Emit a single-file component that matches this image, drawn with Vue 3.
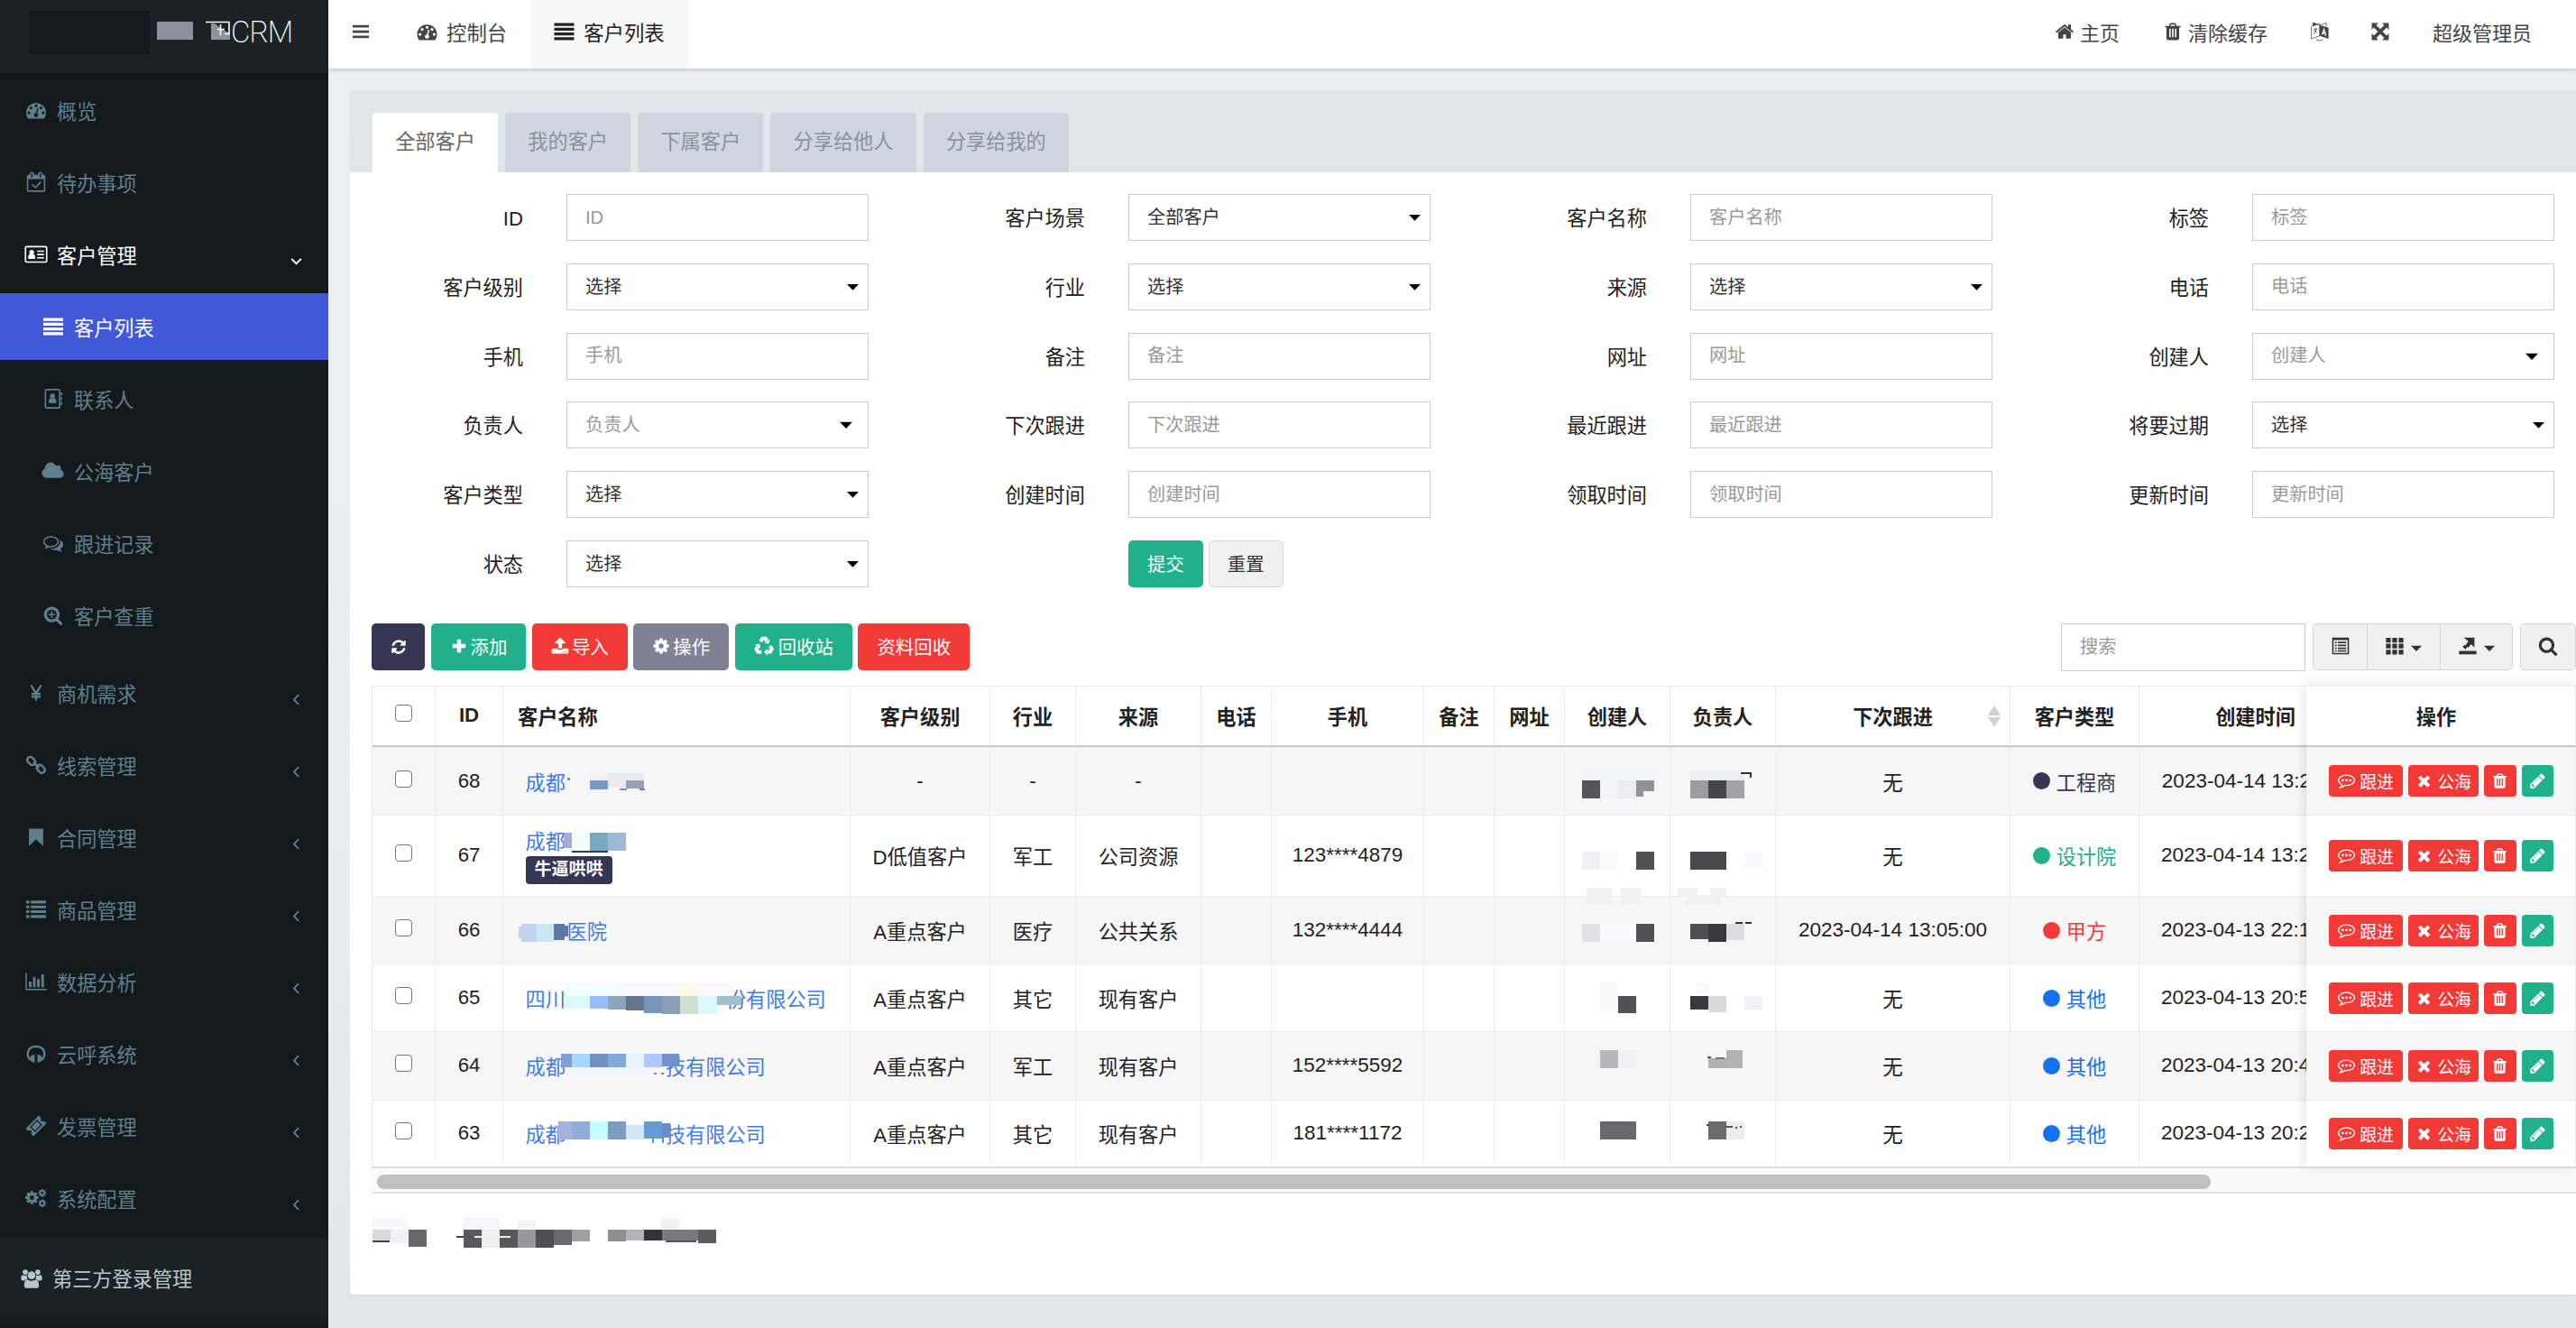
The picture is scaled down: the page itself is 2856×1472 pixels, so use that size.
<script setup>
import { h, ref } from 'vue'

//----------------------------------icons----------------------------//

const cog =
  'M1152 896q0-106-75-181t-181-75-181 75-75 181 75 181 181 75 181-75 75-181zm512-109v222q0 12-8 23t-20 13l-185 28q-19 54-39 91 35 50 107 138 10 12 10 25t-9 23q-27 37-99 108t-94 71q-12 0-26-9l-138-108q-44 23-91 38-16 136-29 186-7 28-36 28h-222q-14 0-24.5-8.5t-11.5-21.5l-28-184q-49-16-90-37l-141 107q-10 9-25 9-14 0-25-11-126-114-165-168-7-10-7-23 0-12 8-23 15-21 51-66.5t54-70.5q-27-50-41-99l-183-27q-13-2-21-12.5t-8-23.5v-222q0-12 8-23t19-13l186-28q14-46 39-92-40-57-107-138-10-12-10-24 0-10 9-23 26-36 98.5-107.5t94.5-71.5q13 0 26 10l138 107q44-23 91-38 16-136 29-186 7-28 36-28h222q14 0 24.5 8.5t11.5 21.5l28 184q49 16 90 37l142-107q9-9 24-9 13 0 25 10 129 119 165 170 7 8 7 22 0 12-8 23-15 21-51 66.5t-54 70.5q26 50 41 98l183 28q13 2 21 12.5t8 23.5z'
const recycleArm =
  '<path d="M620 560L770 310H1020L1130 490" fill="none" stroke="currentColor" stroke-width="290"/><path d="M1390 380L930 640L1270 760z"/>'

const icons = {
  bars: '<path d="M90 250h1610v240H90zM90 780h1610v240H90zM90 1310h1610v240H90z"/>',
  dashboard:
    '<path d="M384 1152q0-53-37.5-90.5t-90.5-37.5-90.5 37.5-37.5 90.5 37.5 90.5 90.5 37.5 90.5-37.5 37.5-90.5zm192-448q0-53-37.5-90.5t-90.5-37.5-90.5 37.5-37.5 90.5 37.5 90.5 90.5 37.5 90.5-37.5 37.5-90.5zm428 481l101-382q6-26-7.5-48.5t-38.5-29.5-48 6.5-30 39.5l-101 382q-60 5-107 43.5t-63 98.5q-20 77 20 146t117 89 146-20 89-117q16-60-6-117t-72-91zm660-33q0-53-37.5-90.5t-90.5-37.5-90.5 37.5-37.5 90.5 37.5 90.5 90.5 37.5 90.5-37.5 37.5-90.5zm-640-640q0-53-37.5-90.5t-90.5-37.5-90.5 37.5-37.5 90.5 37.5 90.5 90.5 37.5 90.5-37.5 37.5-90.5zm448 192q0-53-37.5-90.5t-90.5-37.5-90.5 37.5-37.5 90.5 37.5 90.5 90.5 37.5 90.5-37.5 37.5-90.5zm320 448q0 261-141 483-19 29-54 29h-1402q-35 0-54-29-141-221-141-483 0-182 71-348t191-286 286-191 348-71 348 71 286 191 191 286 71 348z"/>',
  calendar:
    '<path transform="translate(64 -30)" d="M1303 964l-512 512q-10 9-23 9t-23-9l-288-288q-9-10-9-23t9-22l46-46q9-9 22-9t23 9l220 220 444-444q10-9 23-9t22 9l46 46q9 9 9 22t-9 23zm-1175 700h1408v-1024h-1408v1024zm384-1216v-288q0-14-9-23t-23-9h-64q-14 0-23 9t-9 23v288q0 14 9 23t23 9h64q14 0 23-9t9-23zm768 0v-288q0-14-9-23t-23-9h-64q-14 0-23 9t-9 23v288q0 14 9 23t23 9h64q14 0 23-9t9-23zm384-64v1280q0 52-38 90t-90 38h-1408q-52 0-90-38t-38-90v-1280q0-52 38-90t90-38h128v-96q0-66 47-113t113-47h64q66 0 113 47t47 113v96h384v-96q0-66 47-113t113-47h64q66 0 113 47t47 113v96h128q52 0 90 38t38 90z"/>',
  idcard:
    '<rect x="-60" y="190" width="1912" height="1400" rx="110" fill="none" stroke="currentColor" stroke-width="130"/><circle cx="500" cy="700" r="210"/><path d="M180 1230q0-350 180-370q140 90 280 0q180 20 180 370q0 70-70 70H250q-70 0-70-70zM990 540h620v130H990zM990 840h620v130H990zM990 1140h620v130H990z"/>',
  list4: '<path d="M0 120h1792v260H0zM0 550h1792v260H0zM0 980h1792v260H0zM0 1410h1792v260H0z"/>',
  addressbook:
    '<rect x="190" y="70" width="1290" height="1650" rx="90" fill="none" stroke="currentColor" stroke-width="130"/><circle cx="830" cy="640" r="220"/><path d="M480 1230q0-380 190-400q160 100 320 0q190 20 190 400q0 60-70 60H550q-70 0-70-60zM1580 330h130v260h-130zM1580 760h130v260h-130zM1580 1190h130v260h-130z"/>',
  cloud:
    '<path transform="translate(-60 0) scale(1.03 1)" d="M1856 1152q0 159-112.5 271.5t-271.5 112.5h-1088q-185 0-316.5-131.5t-131.5-316.5q0-132 71-241.5t187-163.5q-2-28-2-43 0-212 150-362t362-150q158 0 286.5 88t187.5 230q70-62 166-62 106 0 181 75t75 181q0 75-41 138 129 30 213 134.5t84 239.5z"/>',
  comments:
    '<path d="M704 384q-153 0-286 52t-211.5 141-78.5 191q0 82 53 158t149 132l97 56-35 84q34-20 62-39l44-31 53 10q78 14 153 14 153 0 286-52t211.5-141 78.5-191-78.5-191-211.5-141-286-52zm0-128q191 0 353.5 68.5t256.5 186.5 94 257-94 257-256.5 186.5-353.5 68.5q-86 0-176-16-124 88-278 128-36 9-86 16h-3q-11 0-20.5-8t-11.5-21q-1-3-1-6.5t.5-6.5 2-6l2.5-5 3.5-5.5 4-5 4.5-5 4-4.5q5-6 23-25t26-29.5 22.5-29 25-38.5 20.5-44q-124-72-195-177t-71-224q0-139 94-257t256.5-186.5 353.5-68.5zm822 1169q10 24 20.5 44t25 38.5 22.5 29 26 29.5 23 25q1 1 4 4.5t4.5 5 4 5 3.5 5.5l2.5 5 2 6 .5 6.5-1 6.5q-3 14-13 22t-22 7q-50-7-86-16-154-40-278-128-90 16-176 16-271 0-472-132 58 4 88 4 161 0 309-45t264-129q125-92 192-212t67-254q0-77-23-152 129 71 204 178t75 230q0 120-71 224.5t-195 176.5z"/>',
  searchplus:
    '<path d="M1088 800v64q0 13-9.5 22.5t-22.5 9.5h-224v224q0 13-9.5 22.5t-22.5 9.5h-64q-13 0-22.5-9.5t-9.5-22.5v-224h-224q-13 0-22.5-9.5t-9.5-22.5v-64q0-13 9.5-22.5t22.5-9.5h224v-224q0-13 9.5-22.5t22.5-9.5h64q13 0 22.5 9.5t9.5 22.5v224h224q13 0 22.5 9.5t9.5 22.5zm128 32q0-185-131.5-316.5t-316.5-131.5-316.5 131.5-131.5 316.5 131.5 316.5 316.5 131.5 316.5-131.5 131.5-316.5zm512 832q0 53-37.5 90.5t-90.5 37.5q-54 0-90-38l-343-342q-179 124-399 124-143 0-273.5-55.5t-225-150-150-225-55.5-273.5 55.5-273.5 150-225 225-150 273.5-55.5 273.5 55.5 225 150 150 225 55.5 273.5q0 220-124 399l343 343q37 37 37 90z"/>',
  search:
    '<path d="M1216 832q0-185-131.5-316.5t-316.5-131.5-316.5 131.5-131.5 316.5 131.5 316.5 316.5 131.5 316.5-131.5 131.5-316.5zm512 832q0 52-38 90t-90 38q-54 0-90-38l-343-342q-179 124-399 124-143 0-273.5-55.5t-225-150-150-225-55.5-273.5 55.5-273.5 150-225 225-150 273.5-55.5 273.5 55.5 225 150 150 225 55.5 273.5q0 220-124 399l343 343q37 37 37 90z"/>',
  yen: '<path d="M440 200L896 960L1352 200M896 900V1580M480 1000H1312M480 1250H1312" fill="none" stroke="currentColor" stroke-width="190"/>',
  link: '<g fill="none" stroke="currentColor" stroke-width="200"><rect x="60" y="260" width="800" height="540" rx="250" transform="rotate(45 460 530)"/><rect x="930" y="980" width="800" height="540" rx="250" transform="rotate(45 1330 1250)"/><path d="M640 640L1150 1150"/></g>',
  bookmark: '<path d="M256 128h1280v1560l-640-600-640 600z"/>',
  list: '<path d="M0 110h290v260H0zM0 540h290v260H0zM0 970h290v260H0zM0 1400h290v260H0zM420 110h1372v260H420zM420 540h1372v260H420zM420 970h1372v260H420zM420 1400h1372v260H420z"/>',
  chart: '<path d="M-60 100h120v1440h1800v120H-60zM250 900h230v510H250zM620 480h230v930H620zM990 680h230v730H990zM1370 250h230v1160h-230z"/>',
  headphones:
    '<path d="M330 1430Q130 1200 130 930Q150 250 896 230Q1642 250 1662 930Q1662 1200 1462 1430" fill="none" stroke="currentColor" stroke-width="190"/><path d="M770 960v720L560 1620L260 1440L430 1080zM1022 960v720l210-60l300-180l-170-360z"/>',
  ticket:
    '<g transform="rotate(-45 896 896)"><path fill-rule="evenodd" d="M60 400h1672v300q-190 30-190 196t190 196v300H60v-300q190-30 190-196T60 700zM430 560v672h932V560z"/><path d="M530 660h732v472H530z"/></g>',
  cogs: `<path d="${cog}" transform="translate(-180 160) scale(.78)"/><path d="${cog}" transform="translate(1040 20) scale(.46)"/><path d="${cog}" transform="translate(1040 950) scale(.46)"/>`,
  group:
    '<circle cx="330" cy="330" r="230"/><circle cx="1462" cy="330" r="230"/><circle cx="896" cy="620" r="350"/><path d="M-60 900q0-310 190-310q180 110 380 20q-60 220 30 370q-150 10-240 120H90q-150 0-150-200zM1852 900q0-310-190-310q-180 110-380 20q60 220-30 370q150 10 240 120h210q150 0 150-200zM230 1520q0-500 320-500q300 190 690 0q320 0 320 500q0 260-250 260H480q-250 0-250-260z"/>',
  home: '<path d="M1472 992v480q0 26-19 45t-45 19h-384v-384h-256v384h-384q-26 0-45-19t-19-45v-480q0-1 .5-3t.5-3l575-474 575 474q1 2 1 6zm223-69l-62 74q-8 9-21 11h-3q-13 0-21-7l-692-577-692 577q-12 8-24 7-13-2-21-11l-62-74q-8-10-7-23.5t11-21.5l719-599q32-26 76-26t76 26l244 204v-195q0-14 9-23t23-9h192q14 0 23 9t9 23v408l219 182q10 8 11 21.5t-7 23.5z"/>',
  trash:
    '<path d="M704 1376v-704q0-14-9-23t-23-9h-64q-14 0-23 9t-9 23v704q0 14 9 23t23 9h64q14 0 23-9t9-23zm256 0v-704q0-14-9-23t-23-9h-64q-14 0-23 9t-9 23v704q0 14 9 23t23 9h64q14 0 23-9t9-23zm256 0v-704q0-14-9-23t-23-9h-64q-14 0-23 9t-9 23v704q0 14 9 23t23 9h64q14 0 23-9t9-23zm-544-992h448l-48-117q-7-9-17-11h-317q-10 2-17 11zm928 32v64q0 14-9 23t-23 9h-96v948q0 83-47 143.5t-113 60.5h-832q-66 0-113-58.5t-47-141.5v-952h-96q-14 0-23-9t-9-23v-64q0-14 9-23t23-9h309l70-167q15-37 54-63t79-26h320q40 0 79 26t54 63l70 167h309q14 0 23 9t9 23z"/>',
  language:
    '<path d="M880 300L1680 540V1540L880 1280z"/><path d="M130 430L870 190V1300L130 1540zM280 380V90L960 330L1480 110V460M560 1620Q900 1800 1200 1620" fill="none" stroke="currentColor" stroke-width="60"/><path d="M280 90L700 240L280 380z"/><path d="M300 760L680 640M480 560V680M620 670Q540 960 300 1120M400 840L640 1010" fill="none" stroke="currentColor" stroke-width="70"/><path d="M1110 1170L1270 690L1440 1270M1160 1010L1390 1080" fill="none" stroke="#fff" stroke-width="110"/>',
  expand:
    '<path d="M128 128h600l-190 190L896 676l358-358-190-190h600v600l-190-190-358 358 358 358 190-190v600h-600l190-190-358-358-358 358 190 190H128v-600l190 190 358-358-358-358-190 190z"/>',
  refresh:
    '<path d="M1639 1056q0 5-1 7-64 268-268 434.5t-478 166.5q-146 0-282.5-55t-243.5-157l-129 129q-19 19-45 19t-45-19-19-45v-448q0-26 19-45t45-19h448q26 0 45 19t19 45-19 45l-137 137q71 66 161 102t187 36q134 0 250-65t186-179q11-17 53-117 8-23 30-23h192q13 0 22.5 9.5t9.5 22.5zm25-800v448q0 26-19 45t-45 19h-448q-26 0-45-19t-19-45 19-45l138-138q-148-137-349-137-134 0-250 65t-186 179q-11 17-53 117-8 23-30 23h-199q-13 0-22.5-9.5t-9.5-22.5v-7q65-268 270-434.5t480-166.5q146 0 284 55.5t245 156.5l130-129q19-19 45-19t45 19 19 45z"/>',
  plus: '<path d="M700 250h392v450h450v392h-450v450H700v-450H250V700h450z"/>',
  upload:
    '<path d="M1344 1472q0-26-19-45t-45-19-45 19-19 45 19 45 45 19 45-19 19-45zm256 0q0-26-19-45t-45-19-45 19-19 45 19 45 45 19 45-19 19-45zm128-224v320q0 40-28 68t-68 28h-1472q-40 0-68-28t-28-68v-320q0-40 28-68t68-28h427q21 56 70.5 92t110.5 36h256q61 0 110.5-36t70.5-92h427q40 0 68 28t28 68zm-325-648q-17 40-59 40h-256v448q0 26-19 45t-45 19h-256q-26 0-45-19t-19-45v-448h-256q-42 0-59-40-17-39 14-69l448-448q18-19 45-19t45 19l448 448q31 30 14 69z"/>',
  cog: `<path d="${cog}"/>`,
  recycle: `<g transform="translate(-100 -130) scale(1.12)">${recycleArm}<g transform="rotate(120 896 960)">${recycleArm}</g><g transform="rotate(240 896 960)">${recycleArm}</g></g>`,
  times:
    '<path d="M1490 1322q0 40-28 68l-136 136q-28 28-68 28t-68-28l-294-294-294 294q-28 28-68 28t-68-28l-136-136q-28-28-28-68t28-68l294-294-294-294q-28-28-28-68t28-68l136-136q28-28 68-28t68 28l294 294 294-294q28-28 68-28t68 28l136 136q28 28 28 68t-28 68l-294 294 294 294q28 28 28 68z"/>',
  pencil:
    '<path d="M491 1536l91-91-235-235-91 91v107h128v128h107zm523-928q0-22-22-22-10 0-17 7l-542 542q-7 7-7 17 0 22 22 22 10 0 17-7l542-542q7-7 7-17zm-54-192l416 416-832 832h-416v-416zm683 96q0 53-37 90l-166 166-416-416 166-165q36-38 90-38 53 0 91 38l235 234q37 39 37 91z"/>',
  comment:
    '<path d="M896 290Q1290 290 1520 470T1740 840T1520 1210T896 1390Q800 1390 700 1370Q520 1550 240 1600Q390 1420 400 1270Q60 1080 60 840Q60 650 280 470T896 290z" fill="none" stroke="currentColor" stroke-width="120"/><circle cx="500" cy="840" r="125"/><circle cx="896" cy="840" r="125"/><circle cx="1292" cy="840" r="125"/>',
  listalt:
    '<path fill-rule="evenodd" d="M60 60h1672v1672H60zM200 320v1270h1392V320z"/><path d="M340 480h170v150H340zM340 770h170v150H340zM340 1060h170v150H340zM340 1330h170v130H340zM620 480h840v150H620zM620 770h840v150H620zM620 1060h840v150H620zM620 1330h840v130H620z"/>',
  th: '<path d="M30 80h470v470H30zM660 80h470v470H660zM1290 80h470v470h-470zM30 680h470v470H30zM660 680h470v470H660zM1290 680h470v470h-470zM30 1280h470v470H30zM660 1280h470v470H660zM1290 1280h470v470h-470z"/>',
  export:
    '<path d="M30 1380h1732v350H30zM500 60h1060v1000l-300-310q-210 120-300 330l-290-240q130-280 290-400zM380 950l230-170 230 200-180 280q-200-180-280-310z"/>',
  angleleft: '<path d="M1180 330L620 896L1180 1462" fill="none" stroke="currentColor" stroke-width="190"/>',
  angledown: '<path d="M330 620L896 1180L1462 620" fill="none" stroke="currentColor" stroke-width="190"/>',
  caret: '<path d="M0 470h1792L896 1400z"/>'
}

const Icon = (props) => h('svg', { class: 'icon', viewBox: '0 0 1792 1792', innerHTML: icons[props.name] })
Icon.props = ['name']

// blocks: [x, y, width, height, color]
const Mosaic = (props) =>
  h(
    'svg',
    { class: 'mosaic', width: props.width, height: 44, viewBox: `0 0 ${props.width} 44` },
    props.blocks.map(([x, y, width, height, fill]) => h('rect', { x, y, width, height, fill }))
  )
Mosaic.props = ['width', 'blocks']

//----------------------------------data----------------------------//

const menu = ref([
  { icon: 'dashboard', title: '概览' },
  { icon: 'calendar', title: '待办事项' },
  {
    icon: 'idcard',
    title: '客户管理',
    open: true,
    children: [
      { icon: 'list4', title: '客户列表', active: true },
      { icon: 'addressbook', title: '联系人' },
      { icon: 'cloud', title: '公海客户' },
      { icon: 'comments', title: '跟进记录' },
      { icon: 'searchplus', title: '客户查重' }
    ]
  },
  { icon: 'yen', title: '商机需求', more: true },
  { icon: 'link', title: '线索管理', more: true },
  { icon: 'bookmark', title: '合同管理', more: true },
  { icon: 'list', title: '商品管理', more: true },
  { icon: 'chart', title: '数据分析', more: true },
  { icon: 'headphones', title: '云呼系统', more: true },
  { icon: 'ticket', title: '发票管理', more: true },
  { icon: 'cogs', title: '系统配置', more: true }
])

const tabs = ['全部客户', '我的客户', '下属客户', '分享给他人', '分享给我的']
let activeTab = ref(0)

const fields = [
  { label: 'ID' },
  { label: '客户场景', select: '全部客户' },
  { label: '客户名称' },
  { label: '标签' },
  { label: '客户级别', select: '选择' },
  { label: '行业', select: '选择' },
  { label: '来源', select: '选择' },
  { label: '电话' },
  { label: '手机' },
  { label: '备注' },
  { label: '网址' },
  { label: '创建人', picker: true },
  { label: '负责人', picker: true },
  { label: '下次跟进' },
  { label: '最近跟进' },
  { label: '将要过期', select: '选择' },
  { label: '客户类型', select: '选择' },
  { label: '创建时间' },
  { label: '领取时间' },
  { label: '更新时间' },
  { label: '状态', select: '选择' }
]

const tools = [
  { icon: 'refresh', color: 'dark' },
  { icon: 'plus', text: '添加', color: 'green' },
  { icon: 'upload', text: '导入', color: 'red' },
  { icon: 'cog', text: '操作', color: 'gray' },
  { icon: 'recycle', text: '回收站', color: 'green' },
  { text: '资料回收', color: 'red' }
]

const widths = [70, 75, 385, 155, 95, 139, 78, 169, 78, 78, 117, 117, 260, 143, 258]
const heads = ['客户级别', '行业', '来源', '电话', '手机', '备注', '网址', '创建人', '负责人']

const rows = ref([
  {
    id: 68, before: '成都', after: '', level: '-', trade: '-', source: '-', phone: '',
    next: '无', type: '工程商', color: 'navy', time: '2023-04-14 13:26:11',
    mask: { width: 90, blocks: [[2, 18, 3, 3, '#6b95e8'], [27, 13, 20, 8, '#f0f2f8'], [47, 13, 40, 16, '#e9ebf1'], [27, 21, 20, 10, '#7b9ac4'], [67, 21, 20, 9, '#98a0b5'], [60, 30, 8, 2, '#6b95e8'], [82, 30, 6, 2, '#6b7fb8']] },
    creator: [[19, 8, 80, 13, '#f3f4f7'], [19, 21, 20, 20, '#55565a'], [39, 21, 20, 20, '#f3f3f6'], [59, 21, 20, 20, '#ededf1'], [79, 21, 20, 12, '#929294'], [79, 33, 8, 6, '#929294']],
    owner: [[22, 10, 60, 11, '#eeeff2'], [22, 21, 20, 20, '#9c9ca0'], [42, 21, 20, 20, '#464648'], [62, 21, 20, 20, '#a3a3a6'], [78, 12, 12, 2, '#333333'], [88, 12, 2, 6, '#333333']]
  },
  {
    id: 67, before: '成都', after: '', tag: '牛逼哄哄', level: 'D低值客户', trade: '军工', source: '公司资源', phone: '123****4879',
    next: '无', type: '设计院', color: 'green', time: '2023-04-14 13:20:34', tall: true,
    mask: { width: 67, blocks: [[-2, 14, 9, 17, '#a9a9dc'], [7, 14, 20, 20, '#f2fefe'], [27, 14, 20, 20, '#78a9bf'], [47, 14, 20, 20, '#9eb8d9'], [7, 34, 40, 2, '#343765']] },
    creator: [[19, 18, 20, 20, '#f0f0f4'], [39, 18, 20, 20, '#fbfbfc'], [79, 18, 20, 20, '#525255'], [24, 58, 28, 19, '#f0f0f0'], [62, 58, 22, 19, '#f0f0f0']],
    owner: [[22, 18, 40, 20, '#49494b'], [82, 18, 20, 17, '#f9f9fb'], [8, 58, 22, 10, '#f0f0f0'], [18, 66, 38, 11, '#f0f0f0'], [44, 58, 18, 10, '#f0f0f0']]
  },
  {
    id: 66, before: '', after: '医院', level: 'A重点客户', trade: '医疗', source: '公共关系', phone: '132****4444',
    next: '2023-04-14 13:05:00', type: '甲方', color: 'red', time: '2023-04-13 22:18:02',
    mask: { width: 46, blocks: [[-8, 18, 3, 13, '#c3d1ef'], [-5, 15, 16, 20, '#c3d1ef'], [11, 15, 20, 20, '#c8e7f1'], [31, 15, 12, 18, '#5f78aa'], [43, 17, 4, 12, '#5f78aa']] },
    creator: [[19, 15, 20, 20, '#e2e2e5'], [39, 15, 40, 20, '#fafafc'], [79, 15, 20, 20, '#525254']],
    owner: [[22, 15, 20, 17, '#4e4e50'], [42, 15, 20, 20, '#3a3a3c'], [62, 15, 20, 18, '#dddde0'], [72, 13, 8, 2, '#333333'], [83, 13, 7, 2, '#333333']]
  },
  {
    id: 65, before: '四川', after: '份有限公司', level: 'A重点客户', trade: '其它', source: '现有客户', phone: '',
    next: '无', type: '其他', color: 'blue', time: '2023-04-13 20:55:40',
    mask: { width: 178, blocks: [[0, 5, 60, 15, '#f2fdfd'], [60, 5, 67, 15, '#f8f8fe'], [127, 5, 20, 15, '#fff8e8'], [147, 5, 40, 15, '#fbf8fc'], [0, 20, 27, 14, '#dcf9fd'], [27, 20, 20, 14, '#9abdfa'], [47, 20, 20, 15, '#8ca4b8'], [67, 20, 20, 16, '#67748f'], [87, 20, 20, 19, '#7695bb'], [107, 20, 20, 20, '#8a9fb4'], [127, 20, 20, 20, '#cfe2cf'], [147, 20, 21, 20, '#def6fe'], [168, 20, 27, 10, '#9fc0cc']] },
    creator: [[39, 4, 20, 34, '#fafafb'], [59, 20, 20, 19, '#525254']],
    owner: [[28, 5, 14, 12, '#fafafb'], [22, 20, 20, 15, '#3a3a3c'], [42, 20, 20, 18, '#dadadc'], [82, 20, 20, 15, '#f2f2f4']]
  },
  {
    id: 64, before: '成都', after: '技有限公司', level: 'A重点客户', trade: '军工', source: '现有客户', phone: '152****5592',
    next: '无', type: '其他', color: 'blue', time: '2023-04-13 20:49:25',
    mask: { width: 111, blocks: [[-5, 9, 12, 15, '#7f9fd0'], [7, 9, 20, 15, '#a9d6fc'], [27, 9, 20, 15, '#7391bf'], [47, 9, 20, 15, '#7fabdb'], [67, 9, 20, 15, '#e6f2fd'], [87, 9, 20, 15, '#aec8fb'], [107, 9, 19, 14, '#758fcb'], [2, 24, 85, 9, '#f2f3f8'], [98, 30, 3, 2, '#5e8ee8'], [106, 30, 3, 2, '#5e8ee8']] },
    creator: [[39, 5, 20, 20, '#b8b8ba'], [59, 5, 20, 20, '#f0f0f2']],
    owner: [[42, 14, 20, 11, '#b0b0b2'], [62, 5, 18, 20, '#b2b2b4'], [41, 12, 4, 2, '#555555'], [50, 13, 10, 2, '#777777']]
  },
  {
    id: 63, before: '成都', after: '技有限公司', level: 'A重点客户', trade: '其它', source: '现有客户', phone: '181****1172',
    next: '无', type: '其他', color: 'blue', time: '2023-04-13 20:21:07',
    mask: { width: 111, blocks: [[-8, 9, 15, 20, '#a6b1db'], [7, 9, 20, 20, '#90add7'], [27, 9, 20, 20, '#c5fdfd'], [47, 9, 20, 20, '#7c9cc2'], [67, 13, 20, 16, '#d2e6fb'], [87, 9, 20, 19, '#659dd0'], [107, 11, 9, 16, '#6d8ac6'], [96, 27, 2, 6, '#5e8ee8'], [107, 27, 2, 6, '#5e8ee8']] },
    creator: [[39, 9, 40, 20, '#69696b']],
    owner: [[42, 9, 20, 20, '#6c6c6e'], [62, 9, 20, 20, '#ececee'], [40, 12, 3, 2, '#444444'], [61, 14, 8, 2, '#555555'], [72, 15, 2, 2, '#555555'], [77, 14, 2, 2, '#555555']]
  }
])

const pageInfo = [
  [0, 2, 41, 13, '#f8f8fa'], [102, 2, 40, 13, '#f6f6f8'], [162, 5, 20, 10, '#f3f3f5'], [321, 3, 20, 12, '#f1f1f3'],
  [1, 15, 20, 12, '#d9d9db'], [21, 15, 20, 15, '#f1f1f4'], [41, 15, 20, 19, '#68686a'], [1, 27, 19, 2, '#444444'],
  [94, 22, 18, 2, '#444444'], [102, 15, 20, 20, '#5a5a5c'], [122, 15, 20, 20, '#efeff1'], [142, 15, 20, 20, '#58585a'],
  [162, 15, 20, 20, '#98989a'], [182, 15, 20, 20, '#4f4f51'], [202, 15, 20, 17, '#6a6a6c'], [222, 15, 20, 13, '#a0a0a2'],
  [114, 22, 40, 2, '#eeeeee'], [262, 15, 20, 13, '#8f8f91'], [282, 15, 20, 12, '#b4b4b6'], [302, 15, 20, 12, '#333335'],
  [322, 15, 40, 12, '#7a7a7c'], [362, 15, 20, 15, '#5c5c5e'], [326, 27, 34, 2, '#555555']
]
</script>

<template>
  <div class="app">
    <aside class="sidebar">
      <div class="logo">
        <div class="logo-block"></div>
        <div class="logo-tile"></div>
        <svg class="logo-mark" width="28" height="22" viewBox="0 0 28 22">
          <path d="M6 3h4l9 7 8 4v7H6z" fill="#8e939c" />
          <path d="M0 1.5h26v13h-5M16.5 4v12M13 9.5h8" fill="none" stroke="#fff" stroke-width="1.6" />
        </svg>
        <span>CRM</span>
      </div>
      <nav class="menu">
        <template v-for="item in menu" :key="item.title">
          <a :class="['menu-item', { open: item.open }]">
            <Icon :name="item.icon" />
            <span>{{ item.title }}</span>
            <Icon v-if="item.open" name="angledown" class="angle" />
            <Icon v-if="item.more" name="angleleft" class="angle" />
          </a>
          <div v-if="item.children" class="submenu">
            <a v-for="child in item.children" :key="child.title" :class="['menu-item', { active: child.active }]">
              <Icon :name="child.icon" />
              <span>{{ child.title }}</span>
            </a>
          </div>
        </template>
      </nav>
      <div class="menu-header">
        <Icon name="group" />
        <span>第三方登录管理</span>
      </div>
    </aside>

    <div class="main">
      <header class="topbar">
        <a class="toggle"><Icon name="bars" /></a>
        <a class="page-tab"><Icon name="dashboard" />控制台</a>
        <a class="page-tab current"><Icon name="list4" />客户列表</a>
        <div class="top-right">
          <a class="home"><Icon name="home" />主页</a>
          <a class="clear"><Icon name="trash" />清除缓存</a>
          <a class="lang"><Icon name="language" /></a>
          <a class="full"><Icon name="expand" /></a>
          <a>超级管理员</a>
        </div>
      </header>

      <section class="panel">
        <div class="panel-heading">
          <a v-for="(tab, i) in tabs" :key="tab" :class="['tab', { active: activeTab === i }]" @click="activeTab = i">{{ tab }}</a>
        </div>

        <form class="search-form" @submit.prevent>
          <div v-for="field in fields" :key="field.label" class="form-group">
            <label>{{ field.label }}</label>
            <div :class="['control', { picker: field.picker }]">
              <select v-if="field.select">
                <option>{{ field.select }}</option>
              </select>
              <input v-else type="text" :placeholder="field.label" />
              <Icon v-if="field.select || field.picker" name="caret" />
            </div>
          </div>
          <div class="form-group">
            <div class="form-buttons">
              <button class="btn green" type="submit">提交</button>
              <button class="btn default" type="reset">重置</button>
            </div>
          </div>
        </form>

        <div class="toolbar">
          <button v-for="(tool, i) in tools" :key="i" :class="['btn', tool.color]">
            <Icon v-if="tool.icon" :name="tool.icon" />{{ tool.text }}
          </button>
          <div class="toolbar-right">
            <input class="quick-search" type="text" placeholder="搜索" />
            <div class="btn-group">
              <button><Icon name="listalt" /></button>
              <button><Icon name="th" /><Icon name="caret" class="small-caret" /></button>
              <button><Icon name="export" /><Icon name="caret" class="small-caret" /></button>
            </div>
            <button class="search-btn"><Icon name="search" /></button>
          </div>
        </div>

        <div class="table-wrap">
          <div class="table-scroll">
            <table>
              <colgroup>
                <col v-for="(w, i) in widths" :key="i" :style="{ width: w + 'px' }" />
              </colgroup>
              <thead>
                <tr>
                  <th><i class="check"></i></th>
                  <th>ID</th>
                  <th class="name">客户名称</th>
                  <th v-for="head in heads" :key="head">{{ head }}</th>
                  <th class="sortable">
                    下次跟进
                    <svg class="sort" width="14" height="24" viewBox="0 0 14 24"><path d="M7 0l7 11H0zM7 24l7-11H0z" /></svg>
                  </th>
                  <th>客户类型</th>
                  <th>创建时间</th>
                </tr>
              </thead>
              <tbody>
                <tr v-for="row in rows" :key="row.id" :class="{ tall: row.tall }">
                  <td><i class="check"></i></td>
                  <td>{{ row.id }}</td>
                  <td class="name">
                    <a>{{ row.before }}<Mosaic v-bind="row.mask" />{{ row.after }}</a>
                    <span v-if="row.tag" class="tag">{{ row.tag }}</span>
                  </td>
                  <td>{{ row.level }}</td>
                  <td>{{ row.trade }}</td>
                  <td>{{ row.source }}</td>
                  <td></td>
                  <td class="num">{{ row.phone }}</td>
                  <td></td>
                  <td></td>
                  <td><Mosaic :width="116" :blocks="row.creator" /></td>
                  <td><Mosaic :width="116" :blocks="row.owner" /></td>
                  <td class="num">{{ row.next }}</td>
                  <td>
                    <span :class="['type', row.color]"><i></i>{{ row.type }}</span>
                  </td>
                  <td class="num">{{ row.time }}</td>
                </tr>
              </tbody>
            </table>
          </div>
          <table class="fixed-column">
            <thead>
              <tr>
                <th>操作</th>
              </tr>
            </thead>
            <tbody>
              <tr v-for="row in rows" :key="row.id" :class="{ tall: row.tall }">
                <td>
                  <div class="actions">
                    <button class="red follow"><Icon name="comment" />跟进</button>
                    <button class="red sea"><Icon name="times" />公海</button>
                    <button class="red"><Icon name="trash" /></button>
                    <button class="green"><Icon name="pencil" /></button>
                  </div>
                </td>
              </tr>
            </tbody>
          </table>
        </div>
        <div class="scroll-track"><div class="scroll-thumb"></div></div>
        <div class="page-info"><Mosaic :width="400" :blocks="pageInfo" /></div>
      </section>
    </div>
  </div>
</template>

<style>
body {
  margin: 0;
  overflow: hidden;
}
</style>

<style scoped>
* {
  box-sizing: border-box;
}
.app {
  display: flex;
  width: 2856px;
  height: 1472px;
  overflow: hidden;
  font-family: 'Liberation Sans', 'Noto Sans CJK SC', sans-serif;
  font-size: 22.2px;
  color: #222;
}
button,
input,
select {
  font-family: inherit;
  outline: none;
}
.icon {
  width: 22px;
  height: 22px;
  fill: currentColor;
  overflow: visible;
  flex: none;
}

/* sidebar */
.sidebar {
  width: 364px;
  flex: none;
  background: #141a1b;
  color: #5f7f8d;
  display: flex;
  flex-direction: column;
}
.logo {
  height: 81px;
  flex: none;
  background: #1a2226;
  display: flex;
  align-items: center;
  padding: 0 0 10px 32px;
  color: #fff;
}
.logo-block {
  width: 134px;
  height: 48px;
  background: #141a1b;
}
.logo-tile {
  width: 40px;
  height: 20px;
  margin: 0 14px 4px 8px;
  background: #8b919b;
}
.logo-mark {
  margin-bottom: 4px;
}
.logo span {
  font-family: Roboto, sans-serif;
  font-weight: 200;
  font-size: 33px;
  letter-spacing: -1px;
}
.menu {
  padding: 2px 0 1px;
}
.menu-item {
  height: 74px;
  margin: 0 0 6px;
  padding-left: 29px;
  display: flex;
  align-items: center;
}
.menu-item:first-child {
  margin-top: 2px;
}
.menu-item span {
  margin-left: 12px;
}
.menu-item.open {
  color: #fff;
}
.submenu {
  padding-bottom: 6px;
}
.submenu .menu-item {
  padding-left: 48px;
}
.submenu .menu-item:first-child {
  margin-top: 0;
}
.menu-item.active {
  background: #4159d8;
  color: #fff;
}
.angle {
  width: 17px;
  height: 17px;
  margin: 14px 27px 0 auto;
}
.menu-header {
  flex: 1;
  display: flex;
  align-items: flex-start;
  padding: 28px 0 0 24px;
  background: linear-gradient(#1a2226 80%, #141a1b);
  color: #b8c7ce;
}
.menu-header .icon {
  margin: 6px 12px 0 0;
}

/* topbar */
.main {
  flex: 1;
  min-width: 0;
  background: linear-gradient(#edeff1, #e9ebed 70%, #e4e5e7);
}
.topbar {
  height: 76px;
  background: #fff;
  box-shadow: 0 1px 5px rgba(0, 0, 0, 0.22);
  display: flex;
  align-items: stretch;
  padding-right: 49px;
  font-size: 22px;
  color: #444;
}
.topbar a {
  display: flex;
  align-items: center;
  padding-bottom: 6px;
}
.toggle {
  padding: 0 26px;
}
.toggle .icon {
  width: 20px;
}
.topbar .page-tab {
  padding: 0 26px 6px;
  font-size: 22.4px;
}
.page-tab .icon {
  width: 23px;
  margin-right: 10px;
}
.page-tab.current {
  background: #f8f8f8;
  color: #222;
}
.top-right {
  display: flex;
  margin-left: auto;
}
.home {
  margin-right: 48px;
}
.home .icon,
.clear .icon {
  margin-right: 6px;
}
.clear {
  margin-right: 47px;
}
.lang {
  margin-right: 45px;
}
.full {
  margin-right: 47px;
}

/* panel */
.panel {
  margin: 24px 0 0 24px;
  height: 1335px;
  background: #fff;
  border-radius: 4px 0 0 4px;
  box-shadow: 0 1px 2px rgba(0, 0, 0, 0.06);
}
.panel-heading {
  height: 91px;
  background: #e1e6ea;
  display: flex;
  gap: 8px;
  padding: 25px 25px 0;
}
.tab {
  padding: 0 25.2px;
  height: 66px;
  line-height: 66px;
  font-size: 22.2px;
  border-radius: 4px 4px 0 0;
  background: #cfd6df;
  color: #8a929a;
}
.tab.active {
  background: #fff;
  color: #666;
}
.search-form {
  display: grid;
  grid-template-columns: repeat(4, 623px);
  grid-auto-rows: 76.8px;
  padding: 24px 0 0 24px;
  overflow: hidden;
}
.form-group {
  display: flex;
  align-items: flex-start;
}
label {
  width: 168px;
  margin-right: 48px;
  text-align: right;
  line-height: 56px;
}
.control {
  width: 335px;
  height: 52px;
  border: 1.5px solid #ccc;
  display: flex;
  align-items: center;
  padding: 0 10px 0 20px;
}
.control select,
.control input {
  flex: 1;
  min-width: 0;
  height: 46px;
  padding: 0;
  border: 0;
  background: transparent;
  appearance: none;
  font-size: 20.2px;
  color: #333;
}
input::placeholder {
  color: #999;
}
.control .icon {
  width: 13px;
  height: 14px;
  color: #000;
}
.control.picker {
  padding-right: 17px;
}
.control.picker .icon {
  width: 14px;
  height: 14px;
}
.form-buttons {
  margin-left: 216px;
  display: flex;
  gap: 6px;
}
.btn {
  height: 52px;
  padding: 0 21px 1px;
  border: 0;
  border-radius: 5px;
  color: #fff;
  font-size: 20.4px;
  display: flex;
  align-items: center;
}
.btn.default {
  background: #f0f0f0;
  border: 1px solid #d8d8d8;
  color: #333;
  padding: 0 20px 1px;
}
.green {
  background: #20b18a;
}
.red {
  background: #f43a36;
}
.gray {
  background: #7f8195;
}
.dark {
  background: #343654;
}
.toolbar {
  display: flex;
  gap: 6.6px;
  padding: 15px 0 0 24px;
}
.toolbar .btn .icon {
  width: 20px;
  height: 20px;
  margin-right: 3px;
}
.toolbar .btn.dark {
  padding: 0 20.5px;
}
.toolbar .btn.dark .icon {
  width: 18px;
  margin-right: 0;
}
.toolbar .btn:nth-child(5) .icon {
  width: 22px;
  height: 22px;
  margin-right: 5px;
}
.toolbar-right {
  margin-left: auto;
  display: flex;
  gap: 8px;
}
.quick-search {
  width: 271px;
  height: 53px;
  border: 1.5px solid #ccc;
  padding: 0 20px;
  font-size: 20.2px;
}
.btn-group {
  display: flex;
}
.btn-group button,
.search-btn {
  height: 52px;
  border: 1px solid #d3d3d3;
  background: #f0f0f0;
  color: #333;
  display: flex;
  align-items: center;
  justify-content: center;
  padding: 0 0 2px;
}
.btn-group button {
  width: 81px;
  border-right-width: 0;
}
.btn-group button:first-child {
  width: 60px;
  border-radius: 5px 0 0 5px;
}
.btn-group button:last-child {
  border-right-width: 1px;
  border-radius: 0 5px 5px 0;
}
.btn-group .icon {
  width: 20px;
  height: 20px;
}
.btn-group .icon.small-caret {
  width: 12px;
  height: 13px;
  margin: 5px 0 0 8px;
}
.search-btn {
  width: 62px;
  border-radius: 5px;
}

/* table */
.table-wrap {
  display: flex;
  margin: 16px 0 0 24px;
}
.table-scroll {
  width: 2145px;
  overflow: hidden;
}
table {
  table-layout: fixed;
  border-collapse: separate;
  border-spacing: 0;
}
.table-scroll table {
  width: 2218px;
  border-left: 1px solid #ececec;
}
th,
td {
  padding: 0;
  text-align: center;
  white-space: nowrap;
  border-right: 1px solid #ececec;
  border-top: 1px solid #ececec;
  height: 75.2px;
}
th {
  height: 68px;
  border-bottom: 2px solid #c8c8c8;
  font-weight: bold;
}
.tall td {
  height: 90px;
}
tbody tr:nth-child(odd) td {
  background: #f6f6f6;
}
tbody tr:last-child td {
  border-bottom: 1px solid #ddd;
}
th.name,
td.name {
  text-align: left;
  padding-left: 16px;
}
td.name {
  padding-left: 24.5px;
}
td.name a {
  display: flex;
  align-items: center;
  height: 30px;
  color: #3f7de8;
}
td.name .mosaic {
  z-index: 1;
}
td.num {
  font-size: 22.5px;
}
.mosaic {
  display: block;
  flex: none;
  overflow: visible;
}
.tag {
  display: block;
  width: 96px;
  height: 31px;
  margin-top: 3px;
  line-height: 30px;
  text-align: center;
  border-radius: 4px;
  background: #343654;
  color: #fff;
  font-size: 19px;
  font-weight: bold;
}
.check {
  display: block;
  width: 19px;
  height: 19px;
  margin: -5px auto 0;
  border: 1.5px solid #767676;
  border-radius: 4px;
  background: #fff;
}
.sortable {
  position: relative;
}
.sort {
  position: absolute;
  right: 10px;
  top: 21px;
  fill: #d0d0d0;
}
.type {
  display: inline-flex;
  align-items: center;
  gap: 7px;
  background: none;
}
.type i {
  width: 19px;
  height: 19px;
  border-radius: 50%;
  background: currentColor;
}
.type.navy {
  color: #343654;
}
.type.green {
  color: #20b18a;
}
.type.red {
  color: #f43a36;
}
.type.blue {
  color: #1472ee;
}
.fixed-column {
  position: relative;
  width: 299px;
  background: #fff;
  box-shadow: -2px 0 12px rgba(0, 0, 0, 0.12);
}
.fixed-column th {
  padding-right: 10px;
}
.actions {
  display: flex;
  gap: 6px;
  padding-left: 25px;
}
.actions button {
  width: 35.5px;
  height: 35px;
  padding: 0;
  border: 0;
  border-radius: 4px;
  color: #fff;
  font-size: 18.8px;
  display: flex;
  align-items: center;
  justify-content: center;
  gap: 5px;
}
.actions .icon {
  width: 19px;
  height: 19px;
}
.actions .follow {
  width: 82px;
}
.actions .sea {
  width: 78px;
}
.scroll-track {
  height: 29px;
  margin-left: 24px;
  padding: 7px 6px;
  background: #fafafa;
  border-top: 1px solid #e2e2e2;
  border-bottom: 2px solid #e4e4e4;
}
.scroll-thumb {
  width: 2033px;
  height: 16px;
  border-radius: 8px;
  background: #c0c0c0;
}
.page-info {
  padding: 25px 0 0 24px;
}
</style>
